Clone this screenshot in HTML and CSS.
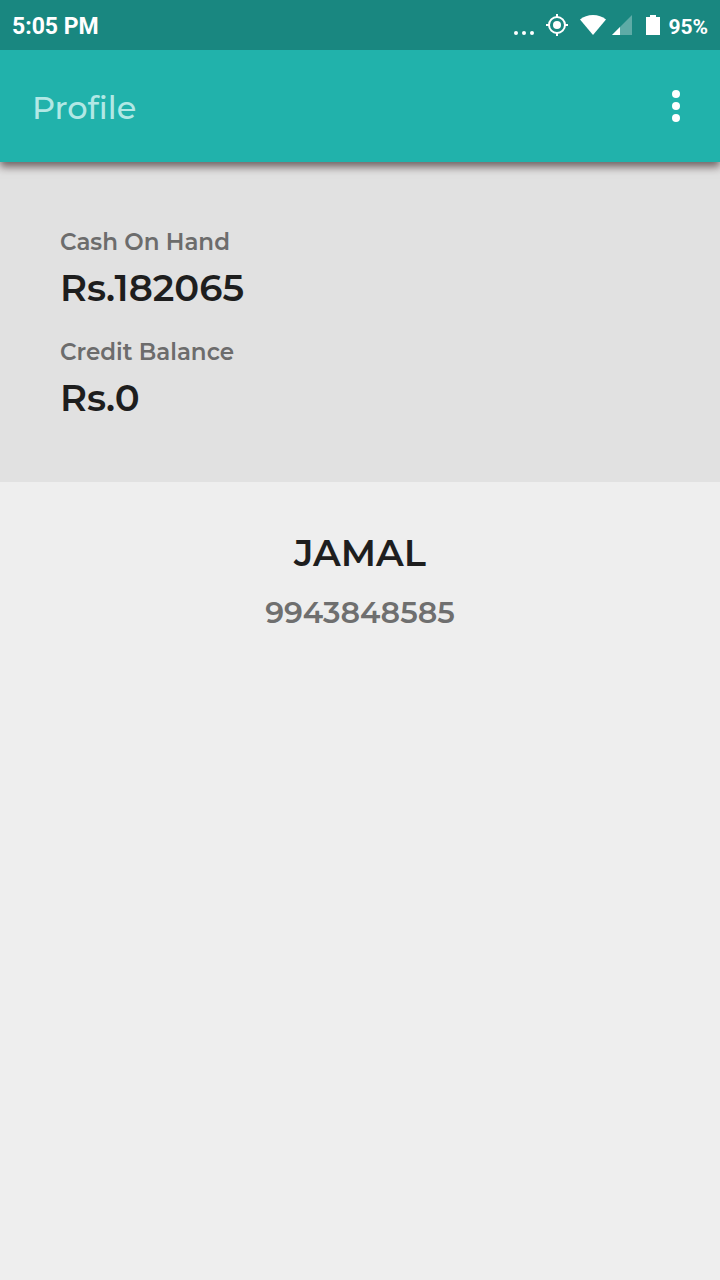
FILE: index.html
```html
<!DOCTYPE html>
<html lang="en">
<head>
    <meta charset="UTF-8">
    <meta name="viewport" content="width=device-width, initial-scale=1.0">
    <title>Profile</title>

    <link rel="stylesheet" href="styles.css">
</head>
<body>
    <div class="status">
        <span class="time">5:05 PM</span>
        <svg class="dots" width="20" height="4" viewBox="0 0 20 4" fill="#fff">
            <circle cx="2" cy="2" r="2"/>
            <circle cx="10" cy="2" r="2"/>
            <circle cx="18" cy="2" r="2"/>
        </svg>
        <svg class="gps" width="22" height="22" viewBox="0 0 22 22" fill="none" stroke="#fff" stroke-width="2">
            <circle cx="11" cy="11" r="8"/>
            <circle cx="11" cy="11" r="4" fill="#fff" stroke="none"/>
            <path d="M11 0v4M11 18v4M0 11h4M18 11h4"/>
        </svg>
        <svg class="wifi" width="26" height="20" viewBox="0 0 26 20" fill="#fff">
            <path d="M13 20L0 4.5C3.5 1.6 8 0 13 0s9.5 1.6 13 4.5z"/>
        </svg>
        <svg class="signal" width="20" height="20" viewBox="0 0 20 20" fill="#fff">
            <path d="M0 20L20 0v20z" opacity=".3"/>
            <path d="M0 20l8-8v8z"/>
        </svg>
        <svg class="battery" width="14" height="20" viewBox="0 0 14 20" fill="#fff">
            <path d="M4 0h6v2h4v18H0V2h4z"/>
        </svg>
        <span class="percent">95%</span>
    </div>

    <header class="toolbar">
        <h1 class="title">Profile</h1>
        <button class="menu" type="button" aria-label="More options">
            <svg width="8" height="32" viewBox="0 0 8 32" fill="#fff">
                <circle cx="4" cy="4" r="4"/>
                <circle cx="4" cy="16" r="4"/>
                <circle cx="4" cy="28" r="4"/>
            </svg>
        </button>
    </header>

    <main>
        <dl class="balance">
            <dt class="label">Cash On Hand</dt>
            <dd class="amount">Rs.182065</dd>
            <dt class="label">Credit Balance</dt>
            <dd class="amount">Rs.0</dd>
        </dl>
        <section class="user">
            <h2 class="name">JAMAL</h2>
            <p class="phone">9943848585</p>
        </section>
    </main>
</body>
</html>
```
FILE: styles.css
```css
body {
    margin: 0;
    background: #eee;
    color: #1e1e1e;
    font-family: Montserrat, Inter, sans-serif;
    font-weight: 600;
}
.status {
    position: relative;
    z-index: 1;
    display: flex;
    align-items: center;
    height: 50px;
    padding: 0 12px;
    background: #198780;
    color: #fff;
    font: 700 21px/24px Roboto, sans-serif;
}
.time,
.percent {
    padding-top: 3px;
}
.time {
    margin-right: auto;
    font-size: 23px;
}
.dots {
    margin: 16px 12px 0 0;
}
.gps {
    margin-right: 12px;
}
.wifi {
    margin-right: 6px;
}
.signal {
    margin-right: 14px;
}
.battery {
    margin-right: 8px;
}
.toolbar {
    position: relative;
    display: flex;
    align-items: center;
    justify-content: space-between;
    height: 112px;
    padding: 0 32px;
    background: #21b2ab;
    box-shadow: 0 5px 8px rgba(40, 20, 20, .6);
}
.title {
    margin: 0;
    padding-top: 4px;
    color: #b2e8e5;
    font-size: 32px;
    font-weight: 500;
    line-height: 44px;
}
.menu {
    display: flex;
    padding: 8px;
    border: 0;
    background: none;
    cursor: pointer;
}
.balance {
    margin: 0;
    padding: 60px;
    background: #e1e1e1;
}
.label {
    color: #6c6c6c;
    font-size: 23px;
    line-height: 40px;
}
.amount {
    margin: 0 0 18px;
    font-size: 37px;
    line-height: 52px;
}
.amount:last-child {
    margin: 0 0 -2px;
}
.user {
    padding: 40px 20px;
    text-align: center;
}
.name {
    margin: 0;
    font-size: 37px;
    font-weight: 600;
    line-height: 62px;
}
.phone {
    margin: 0;
    color: #6f6f6f;
    font-size: 30px;
    line-height: 58px;
}
```
